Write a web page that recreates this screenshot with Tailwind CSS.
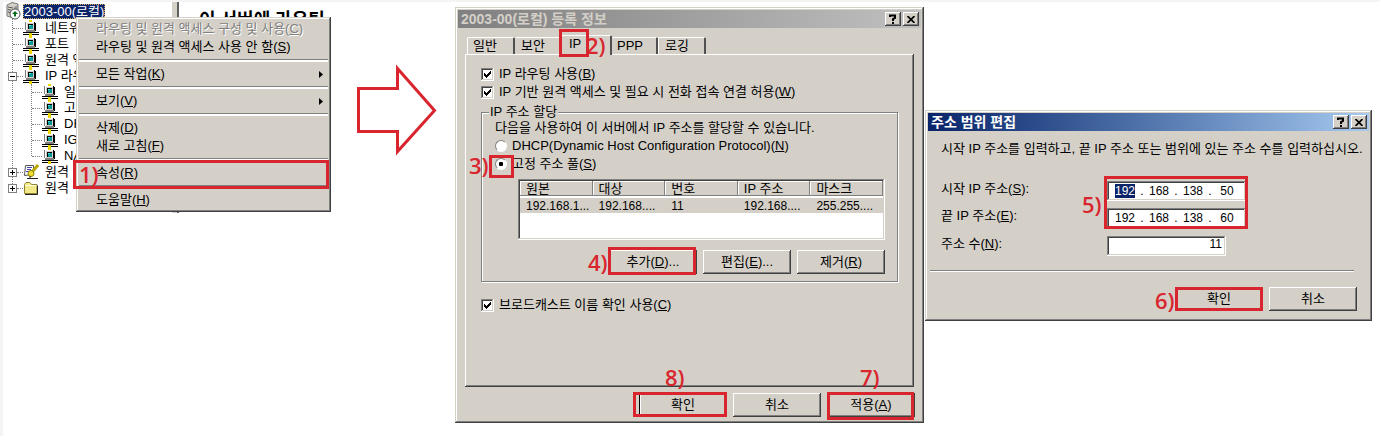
<!DOCTYPE html>
<html lang="ko">
<head>
<meta charset="utf-8">
<title>라우팅 및 원격 액세스</title>
<script src="https://cdn.jsdelivr.net/npm/@tailwindcss/browser@4"></script>
</head>
<body class="bg-[#f4f4f4] font-['Liberation_Sans','Noto_Sans_CJK_KR',sans-serif] text-[13px] leading-4 text-black">
<svg class="hidden" aria-hidden="true">
  <symbol id="pc" viewBox="0 0 16 16">
    <g shape-rendering="crispEdges">
      <path fill="#000" d="M3 2h9v1h1v8H4v-1H3zM0 12h16v1H0zM0 14h16v1H0z"/>
      <path fill="#808080" d="M2 2h1v8H2zM3 10h9v2H3z"/>
      <path fill="#d4d0c8" d="M3 2h8v8H3z"/>
      <path fill="#fff" d="M3 2h8v1H3zM3 2h1v8H3z"/>
      <path fill="#000" d="M5 4h5v5H5z"/>
      <path fill="#0a9a9a" d="M6 5h4v4H6z"/>
      <path fill="#5fe0e0" d="M6 5h2v1H6z"/>
      <path fill="#e8d800" d="M6 0h3v2H6zM6 13h3v3H6z"/>
    </g>
  </symbol>
  <symbol id="server" viewBox="0 0 16 18">
    <path fill="#d4d0c8" stroke="#777" d="M2 3l5-2.500 6 1.500v11l-5 3-6-2z"/>
    <path fill="#999" d="M9 5l4-2v10l-4 2z"/>
    <path stroke="#555" d="M3 5l5 1M3 7.500l5 1M3 10l3 .6"/>
    <circle cx="10" cy="12" r="5" fill="#fff" stroke="#555"/>
    <path fill="#0a6a1a" d="M10 9l3 3h-2v2.500H9V12H7z"/>
  </symbol>
  <symbol id="policy" viewBox="0 0 16 16">
    <path fill="#fff" stroke="#555" d="M2.500 1.500h8v9l-9 1z"/>
    <path stroke="#44a" d="M4 3.500h5M4 5.500h4M3 7.500h4"/>
    <path fill="none" stroke="#b8a800" stroke-width="3" d="M15 1L9 8"/>
    <circle cx="8" cy="9.500" r="3" fill="#f0e030" stroke="#8a7c00"/>
    <path stroke="#222" fill="none" d="M4 14.500h11M7 12v2"/>
  </symbol>
  <symbol id="folder" viewBox="0 0 16 16">
    <path fill="#f3e98a" stroke="#8c8230" d="M1.500 4.500l1.500-2h4l1.500 2h5.500v9h-12.500z"/>
    <path stroke="#fffde0" d="M2.500 5.500h11"/>
    <path stroke="#222" fill="none" d="M2 14.500h12.500v-9"/>
  </symbol>
  <symbol id="check" viewBox="0 0 13 13">
    <path fill="#000" shape-rendering="crispEdges" d="M3 5h1v1h1v1h1V6h1V5h1V4h1V3h1v3H9v1H8v1H7v1H6v1H5V9H4V8H3z"/>
  </symbol>
</svg>

<main class="relative ml-[3px] mt-[2px] min-h-[434px] bg-white">

  <!-- Console tree -->
  <section class="absolute left-0 top-0 flex h-[211px] w-[340px] items-start overflow-hidden">
    <div class="relative h-full w-[169px] overflow-hidden whitespace-nowrap">
      <span class="absolute left-[9px] top-4 h-[170px] border-l border-dotted border-[#808080]"></span>
      <span class="absolute left-[28px] top-[82px] h-[72px] border-l border-dotted border-[#808080]"></span>
      <ul class="relative">
        <li class="flex h-[18px] items-center gap-0.5 pl-0.5"><svg class="h-[18px] w-4"><use href="#server"/></svg><span class="bg-[#0a246a] px-px text-white leading-[15px] outline outline-dotted outline-[#d8b060] -outline-offset-1">2003-00(로컬)</span></li>
        <li class="flex h-4 items-center pl-[10px]"><i class="w-2.5 border-t border-dotted border-[#808080]"></i><svg class="mr-1.5 h-4 w-4"><use href="#pc"/></svg>네트워</li>
        <li class="flex h-4 items-center pl-[10px]"><i class="w-2.5 border-t border-dotted border-[#808080]"></i><svg class="mr-1.5 h-4 w-4"><use href="#pc"/></svg>포트</li>
        <li class="flex h-4 items-center pl-[10px]"><i class="w-2.5 border-t border-dotted border-[#808080]"></i><svg class="mr-1.5 h-4 w-4"><use href="#pc"/></svg>원격 액</li>
        <li class="flex h-4 items-center pl-[5px]"><button aria-label="접기" class="flex h-[9px] w-[9px] items-center justify-center border border-[#808080] bg-white"><i class="h-px w-[5px] bg-black"></i></button><i class="w-1.5 border-t border-dotted border-[#808080]"></i><svg class="mr-1.5 h-4 w-4"><use href="#pc"/></svg>IP 라우</li>
        <li class="flex h-4 items-center pl-[29px]"><i class="w-2.5 border-t border-dotted border-[#808080]"></i><svg class="mr-1.5 h-4 w-4"><use href="#pc"/></svg>일</li>
        <li class="flex h-4 items-center pl-[29px]"><i class="w-2.5 border-t border-dotted border-[#808080]"></i><svg class="mr-1.5 h-4 w-4"><use href="#pc"/></svg>고</li>
        <li class="flex h-4 items-center pl-[29px]"><i class="w-2.5 border-t border-dotted border-[#808080]"></i><svg class="mr-1.5 h-4 w-4"><use href="#pc"/></svg>DH</li>
        <li class="flex h-4 items-center pl-[29px]"><i class="w-2.5 border-t border-dotted border-[#808080]"></i><svg class="mr-1.5 h-4 w-4"><use href="#pc"/></svg>IG</li>
        <li class="flex h-4 items-center pl-[29px]"><i class="w-2.5 border-t border-dotted border-[#808080]"></i><svg class="mr-1.5 h-4 w-4"><use href="#pc"/></svg>NA</li>
        <li class="flex h-4 items-center pl-[5px]"><button aria-label="펼치기" class="relative h-[9px] w-[9px] border border-[#808080] bg-white"><i class="absolute left-px top-[3px] h-px w-[5px] bg-black"></i><i class="absolute left-[3px] top-px h-[5px] w-px bg-black"></i></button><i class="w-1.5 border-t border-dotted border-[#808080]"></i><svg class="mr-1.5 h-4 w-4"><use href="#policy"/></svg>원격</li>
        <li class="flex h-4 items-center pl-[5px]"><button aria-label="펼치기" class="relative h-[9px] w-[9px] border border-[#808080] bg-white"><i class="absolute left-px top-[3px] h-px w-[5px] bg-black"></i><i class="absolute left-[3px] top-px h-[5px] w-px bg-black"></i></button><i class="w-1.5 border-t border-dotted border-[#808080]"></i><svg class="mr-1.5 h-4 w-4"><use href="#folder"/></svg>원격</li>
      </ul>
    </div>
    <div class="h-full w-[7px] border-r-2 border-[#606060] bg-[#d4d0c8]"></div>
    <h1 class="h-[15px] overflow-hidden whitespace-nowrap pl-5 pt-2 text-[18px] font-bold leading-5">이 서버에 라우팅</h1>
  </section>

  <!-- Context menu -->
  <menu class="absolute left-[73px] top-[15px] w-[255px] bg-[#d4d0c8] p-[3px] shadow-[inset_-1px_-1px_0_#404040,inset_1px_1px_0_#d4d0c8,inset_-2px_-2px_0_#808080,inset_2px_2px_0_#fff]">
    <li><button disabled class="block h-[18px] w-full pl-[17px] text-left text-[#808080] [text-shadow:1px_1px_0_#fff]">라우팅 및 원격 액세스 구성 및 사용(<u>C</u>)</button></li>
    <li><button class="block h-[18px] w-full pl-[17px] text-left">라우팅 및 원격 액세스 사용 안 함(<u>S</u>)</button></li>
    <li class="py-[3px]"><hr class="h-[3px] border-b-2 border-t border-b-white border-t-[#808080]"></li>
    <li><button class="flex h-[18px] w-full items-center justify-between pl-[17px] pr-[5px] text-left"><span>모든 작업(<u>K</u>)</span><svg class="h-[7px] w-1" viewBox="0 0 4 7"><path d="M0 0l4 3.500-4 3.500z"/></svg></button></li>
    <li class="py-[3px]"><hr class="h-[3px] border-b-2 border-t border-b-white border-t-[#808080]"></li>
    <li><button class="flex h-[18px] w-full items-center justify-between pl-[17px] pr-[5px] text-left"><span>보기(<u>V</u>)</span><svg class="h-[7px] w-1" viewBox="0 0 4 7"><path d="M0 0l4 3.500-4 3.500z"/></svg></button></li>
    <li class="py-[3px]"><hr class="h-[3px] border-b-2 border-t border-b-white border-t-[#808080]"></li>
    <li><button class="block h-[18px] w-full pl-[17px] text-left">삭제(<u>D</u>)</button></li>
    <li><button class="block h-[18px] w-full pl-[17px] text-left">새로 고침(<u>F</u>)</button></li>
    <li class="py-[3px]"><hr class="h-[3px] border-b-2 border-t border-b-white border-t-[#808080]"></li>
    <li><button class="block h-[18px] w-full pl-[17px] text-left">속성(<u>R</u>)</button></li>
    <li class="py-[3px]"><hr class="h-[3px] border-b-2 border-t border-b-white border-t-[#808080]"></li>
    <li><button class="block h-[18px] w-full pl-[17px] text-left">도움말(<u>H</u>)</button></li>
  </menu>

  <svg class="absolute left-[351px] top-[60px] h-24 w-[86px]" viewBox="354 62 86 96" aria-hidden="true"><path fill="#fff" stroke="#d9252e" stroke-width="3" d="M358.500 88.500H397.500V68.500L434.500 110.500 397.500 151.500V131.500H358.500z"/></svg>

  <!-- Server properties dialog -->
  <section class="absolute left-[452px] top-[5px] w-[469px] bg-[#d4d0c8] p-[3px] shadow-[inset_-1px_-1px_0_#404040,inset_1px_1px_0_#d4d0c8,inset_-2px_-2px_0_#808080,inset_2px_2px_0_#fff]">
    <header class="flex h-[18px] items-center gap-0.5 bg-linear-to-r from-[#808080] to-[#c0c0c0] pl-[3px] pr-0.5">
      <h2 class="flex-1 text-[14px] font-bold text-[#d4d0c8]">2003-00(로컬) 등록 정보</h2>
      <button aria-label="도움말" class="flex h-3.5 w-4 items-center justify-center bg-[#d4d0c8] shadow-[inset_-1px_-1px_0_#404040,inset_1px_1px_0_#fff,inset_-2px_-2px_0_#808080]"><svg class="h-2.5 w-2" viewBox="0 0 8 10"><path fill="none" stroke="#000" stroke-width="2" d="M1 3V1.500h5V4L4 5v2M4 8v2"/></svg></button>
      <button aria-label="닫기" class="flex h-3.5 w-4 items-center justify-center bg-[#d4d0c8] shadow-[inset_-1px_-1px_0_#404040,inset_1px_1px_0_#fff,inset_-2px_-2px_0_#808080]"><svg class="h-[7px] w-2" viewBox="0 0 8 7"><path stroke="#000" stroke-width="1.700" d="M.5 0l7 7M7.500 0l-7 7"/></svg></button>
    </header>
    <nav class="ml-[9px] mt-[7px] flex h-[19px] items-end" role="tablist">
      <button role="tab" class="h-[17px] w-12 rounded-t-[2px] border-l border-r-2 border-t border-white border-r-[#505050] pl-[5px] text-left">일반</button>
      <button role="tab" class="h-[17px] w-[46px] rounded-t-[2px] border-t border-white pl-1.5 text-left">보안</button>
      <button role="tab" aria-selected="true" class="relative top-px h-5 w-[51px] rounded-t-[2px] border-l border-r-2 border-t border-white border-r-[#505050] bg-[#d4d0c8] pb-1 pl-[7px] text-left">IP</button>
      <button role="tab" class="h-[17px] w-[46px] rounded-t-[2px] border-r-2 border-t border-white border-r-[#505050] pl-[5px] text-left">PPP</button>
      <button role="tab" class="h-[17px] w-12 rounded-t-[2px] border-l border-r-2 border-t border-white border-r-[#505050] pl-1.5 text-left">로깅</button>
    </nav>
    <div class="mx-[7px] min-h-[333px] px-4 pt-[11px] shadow-[inset_-1px_-1px_0_#404040,inset_1px_1px_0_#fff,inset_-2px_-2px_0_#808080]">
      <label class="relative flex h-[18px] items-center gap-[5px]"><input type="checkbox" checked class="h-[13px] w-[13px] appearance-none bg-white shadow-[inset_-1px_-1px_0_#fff,inset_1px_1px_0_#808080,inset_-2px_-2px_0_#d4d0c8,inset_2px_2px_0_#404040]"><svg class="pointer-events-none absolute left-0 h-[13px] w-[13px]"><use href="#check"/></svg><span>IP 라우팅 사용(<u>B</u>)</span></label>
      <label class="relative flex h-[18px] items-center gap-[5px]"><input type="checkbox" checked class="h-[13px] w-[13px] appearance-none bg-white shadow-[inset_-1px_-1px_0_#fff,inset_1px_1px_0_#808080,inset_-2px_-2px_0_#d4d0c8,inset_2px_2px_0_#404040]"><svg class="pointer-events-none absolute left-0 h-[13px] w-[13px]"><use href="#check"/></svg><span>IP 기반 원격 액세스 및 필요 시 전화 접속 연결 허용(<u>W</u>)</span></label>
      <fieldset class="mt-[3px] border border-[#808080] pb-[7px] pl-[13px] pr-3 shadow-[1px_1px_0_#fff,inset_1px_1px_0_#fff]">
        <legend class="-ml-1.5 bg-[#d4d0c8] px-px">IP 주소 할당</legend>
        <p>다음을 사용하여 이 서버에서 IP 주소를 할당할 수 있습니다.</p>
        <label class="mt-px flex h-[18px] items-center gap-[5px]"><input type="radio" name="pool" class="h-3 w-3 appearance-none rounded-full border border-[#808080] border-b-white border-r-white bg-white"><span>DHCP(Dynamic Host Configuration Protocol)(<u>N</u>)</span></label>
        <label class="flex h-[18px] items-center gap-[5px]"><input type="radio" name="pool" checked class="h-3 w-3 appearance-none rounded-full border border-[#808080] border-b-white border-r-white bg-white bg-[radial-gradient(circle,#000_2px,transparent_2.5px)]"><span>고정 주소 풀(<u>S</u>)</span></label>
        <div class="ml-[23px] mt-1.5 h-[61px] bg-white p-0.5 shadow-[inset_-1px_-1px_0_#fff,inset_1px_1px_0_#808080,inset_-2px_-2px_0_#d4d0c8,inset_2px_2px_0_#404040]">
          <table class="w-full table-fixed text-left">
            <thead class="bg-[#d4d0c8]">
              <tr class="h-4 leading-[15px] [&>th]:font-normal [&>th]:p-0 [&>th]:pl-1.5 [&>th]:shadow-[inset_-1px_-1px_0_#808080,inset_1px_1px_0_#fff]"><th>원본</th><th>대상</th><th>번호</th><th>IP 주소</th><th>마스크</th></tr>
            </thead>
            <tbody>
              <tr class="h-4 text-[12px] leading-[14px] [&>td]:border-t-2 [&>td]:border-white [&>td]:bg-[#d4d0c8] [&>td]:p-0 [&>td]:pl-1.5"><td>192.168.1...</td><td>192.168....</td><td>11</td><td>192.168....</td><td>255.255....</td></tr>
            </tbody>
          </table>
        </div>
        <div class="mt-2.5 flex justify-end gap-1.5">
          <button class="h-6 w-[88px] shadow-[inset_-1px_-1px_0_#404040,inset_1px_1px_0_#fff,inset_-2px_-2px_0_#808080]">추가(<u>D</u>)...</button>
          <button class="h-6 w-[88px] shadow-[inset_-1px_-1px_0_#404040,inset_1px_1px_0_#fff,inset_-2px_-2px_0_#808080]">편집(<u>E</u>)...</button>
          <button class="h-6 w-[88px] shadow-[inset_-1px_-1px_0_#404040,inset_1px_1px_0_#fff,inset_-2px_-2px_0_#808080]">제거(<u>R</u>)</button>
        </div>
      </fieldset>
      <label class="relative mt-3.5 flex h-[18px] items-center gap-[5px]"><input type="checkbox" checked class="h-[13px] w-[13px] appearance-none bg-white shadow-[inset_-1px_-1px_0_#fff,inset_1px_1px_0_#808080,inset_-2px_-2px_0_#d4d0c8,inset_2px_2px_0_#404040]"><svg class="pointer-events-none absolute left-0 h-[13px] w-[13px]"><use href="#check"/></svg><span>브로드캐스트 이름 확인 사용(<u>C</u>)</span></label>
    </div>
    <footer class="mt-1.5 flex justify-end gap-1.5 pb-[3px] pr-1.5">
      <button class="h-6 w-[88px] border border-black shadow-[inset_1px_1px_0_#fff,inset_-1px_-1px_0_#808080]">확인</button>
      <button class="h-6 w-[88px] shadow-[inset_-1px_-1px_0_#404040,inset_1px_1px_0_#fff,inset_-2px_-2px_0_#808080]">취소</button>
      <button class="h-6 w-[88px] shadow-[inset_-1px_-1px_0_#404040,inset_1px_1px_0_#fff,inset_-2px_-2px_0_#808080]">적용(<u>A</u>)</button>
    </footer>
  </section>

  <!-- Address range dialog -->
  <section class="absolute left-[922px] top-[108px] w-[447px] bg-[#d4d0c8] p-[3px] shadow-[inset_-1px_-1px_0_#404040,inset_1px_1px_0_#d4d0c8,inset_-2px_-2px_0_#808080,inset_2px_2px_0_#fff]">
    <header class="flex h-[18px] items-center gap-0.5 bg-linear-to-r from-[#0a246a] to-[#a6caf0] pl-[3px] pr-0.5">
      <h2 class="flex-1 text-[14px] font-bold text-white">주소 범위 편집</h2>
      <button aria-label="도움말" class="flex h-3.5 w-4 items-center justify-center bg-[#d4d0c8] shadow-[inset_-1px_-1px_0_#404040,inset_1px_1px_0_#fff,inset_-2px_-2px_0_#808080]"><svg class="h-2.5 w-2" viewBox="0 0 8 10"><path fill="none" stroke="#000" stroke-width="2" d="M1 3V1.500h5V4L4 5v2M4 8v2"/></svg></button>
      <button aria-label="닫기" class="flex h-3.5 w-4 items-center justify-center bg-[#d4d0c8] shadow-[inset_-1px_-1px_0_#404040,inset_1px_1px_0_#fff,inset_-2px_-2px_0_#808080]"><svg class="h-[7px] w-2" viewBox="0 0 8 7"><path stroke="#000" stroke-width="1.700" d="M.5 0l7 7M7.500 0l-7 7"/></svg></button>
    </header>
    <p class="mt-2.5 whitespace-nowrap pl-[13px]">시작 IP 주소를 입력하고, 끝 IP 주소 또는 범위에 있는 주소 수를 입력하십시오.</p>
    <div class="mt-6 flex pl-[13px]">
      <label for="s1" class="w-[166px]">시작 IP 주소(<u>S</u>):</label>
      <div class="flex h-5 w-[139px] items-center bg-white pl-2 text-[12px] shadow-[inset_-1px_-1px_0_#fff,inset_1px_1px_0_#808080,inset_-2px_-2px_0_#d4d0c8,inset_2px_2px_0_#404040]">
        <input id="s1" value="192" class="h-3.5 w-5 bg-[#0a246a] text-center text-white"><span class="w-3.5 text-center">.</span><input aria-label="시작 2" value="168" class="h-3.5 w-5 text-center"><span class="w-3.5 text-center">.</span><input aria-label="시작 3" value="138" class="h-3.5 w-5 text-center"><span class="w-3.5 text-center">.</span><input aria-label="시작 4" value="50" class="h-3.5 w-5 text-center">
      </div>
    </div>
    <div class="mt-[7px] flex pl-[13px]">
      <label for="e1" class="w-[166px]">끝 IP 주소(<u>E</u>):</label>
      <div class="flex h-5 w-[139px] items-center bg-white pl-2 text-[12px] shadow-[inset_-1px_-1px_0_#fff,inset_1px_1px_0_#808080,inset_-2px_-2px_0_#d4d0c8,inset_2px_2px_0_#404040]">
        <input id="e1" value="192" class="h-3.5 w-5 text-center"><span class="w-3.5 text-center">.</span><input aria-label="끝 2" value="168" class="h-3.5 w-5 text-center"><span class="w-3.5 text-center">.</span><input aria-label="끝 3" value="138" class="h-3.5 w-5 text-center"><span class="w-3.5 text-center">.</span><input aria-label="끝 4" value="60" class="h-3.5 w-5 text-center">
      </div>
    </div>
    <div class="mt-2 flex pl-[13px]">
      <label for="n" class="w-[166px]">주소 수(<u>N</u>):</label>
      <input id="n" value="11" class="h-5 w-[119px] bg-white pb-1 pr-1 text-right text-[12px] shadow-[inset_-1px_-1px_0_#fff,inset_1px_1px_0_#808080,inset_-2px_-2px_0_#d4d0c8,inset_2px_2px_0_#404040]">
    </div>
    <hr class="ml-0.5 mr-[15px] mt-3.5 h-0.5 border-b border-t border-b-white border-t-[#808080]">
    <footer class="mt-[15px] flex justify-end gap-1.5 pb-[7px] pr-3">
      <button class="h-6 w-[88px] border border-black shadow-[inset_1px_1px_0_#fff,inset_-1px_-1px_0_#808080]">확인</button>
      <button class="h-6 w-[88px] shadow-[inset_-1px_-1px_0_#404040,inset_1px_1px_0_#fff,inset_-2px_-2px_0_#808080]">취소</button>
    </footer>
  </section>

  <!-- Numbered step callouts -->
  <div class="pointer-events-none absolute inset-0 font-['Open_Sans',sans-serif] text-[22px] leading-6 text-[#d9252e]">
    <i class="absolute left-[70px] top-[158px] h-[29px] w-[256px] border-3"></i><span class="absolute font-semibold left-[76px] top-[160px]">1)</span>
    <i class="absolute left-[556px] top-[27px] h-7 w-[30px] border-3"></i><span class="absolute font-semibold left-[583px] top-[31px]">2)</span>
    <i class="absolute left-[486px] top-[153px] h-[23px] w-[25px] border-3"></i><span class="absolute font-semibold left-[466px] top-[151px]">3)</span>
    <i class="absolute left-[605px] top-[245px] h-7 w-[88px] border-3"></i><span class="absolute font-semibold left-[585px] top-[248px]">4)</span>
    <i class="absolute left-[1101px] top-[174px] h-[53px] w-[144px] border-3"></i><span class="absolute font-semibold left-[1079px] top-[190px]">5)</span>
    <i class="absolute left-[1172px] top-[285px] h-6 w-[88px] border-3"></i><span class="absolute font-semibold left-[1152px] top-[286px]">6)</span>
    <i class="absolute left-[824px] top-[390px] h-7 w-[87px] border-3"></i><span class="absolute font-semibold left-[857px] top-[363px]">7)</span>
    <i class="absolute left-[630px] top-[390px] h-[25px] w-[94px] border-3"></i><span class="absolute font-semibold left-[662px] top-[363px]">8)</span>
  </div>
</main>
</body>
</html>
